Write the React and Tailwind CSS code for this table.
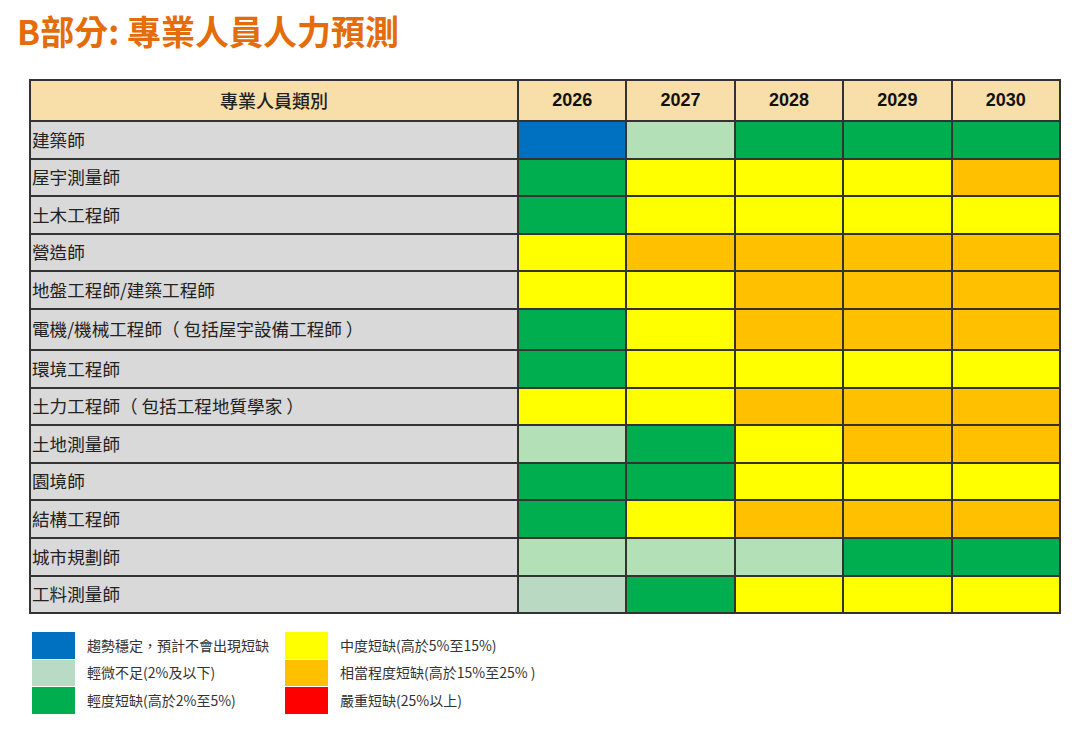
import React from "react";

const C = {
  blue: "bg-[#0070c0]",
  lg: "bg-[#b4e0b8]",
  lg2: "bg-[#b9d9c3]",
  g: "bg-[#00ae50]",
  y: "bg-[#ffff00]",
  o: "bg-[#ffc000]",
};

const years = ["2026", "2027", "2028", "2029", "2030"];

const rows = [
  { name: "建築師", cells: ["blue", "lg", "g", "g", "g"] },
  { name: "屋宇測量師", cells: ["g", "y", "y", "y", "o"] },
  { name: "土木工程師", cells: ["g", "y", "y", "y", "y"] },
  { name: "營造師", cells: ["y", "o", "o", "o", "o"] },
  { name: "地盤工程師/建築工程師", cells: ["y", "y", "o", "o", "o"] },
  { name: "電機/機械工程師（ 包括屋宇設備工程師 ）", cells: ["g", "y", "o", "o", "o"], tall: true },
  { name: "環境工程師", cells: ["g", "y", "y", "y", "y"] },
  { name: "土力工程師（ 包括工程地質學家 ）", cells: ["y", "y", "o", "o", "o"] },
  { name: "土地測量師", cells: ["lg", "g", "y", "o", "o"] },
  { name: "園境師", cells: ["g", "g", "y", "y", "y"] },
  { name: "結構工程師", cells: ["g", "y", "o", "o", "o"] },
  { name: "城市規劃師", cells: ["lg", "lg", "lg", "g", "g"] },
  { name: "工料測量師", cells: ["lg2", "g", "y", "y", "y"] },
];

const legendLeft = [
  { color: "bg-[#0070c0]", label: "趨勢穩定，預計不會出現短缺" },
  { color: "bg-[#b9dac4]", label: "輕微不足(2%及以下)" },
  { color: "bg-[#00ae50]", label: "輕度短缺(高於2%至5%)" },
];

const legendRight = [
  { color: "bg-[#ffff00]", label: "中度短缺(高於5%至15%)" },
  { color: "bg-[#ffc000]", label: "相當程度短缺(高於15%至25% )" },
  { color: "bg-[#ff0000]", label: "嚴重短缺(25%以上)" },
];

function LegendCol({ items, width }) {
  return (
    <div className={`flex flex-col gap-px ${width}`}>
      {items.map((it) => (
        <div key={it.label} className="flex items-center h-[26.5px]">
          <div className={`w-[43px] h-full ${it.color}`} />
          <span className="ml-[12px] text-[14px] text-[#333]">{it.label}</span>
        </div>
      ))}
    </div>
  );
}

export default function App() {
  return (
    <div
      className="w-[1080px] h-[736px] bg-white overflow-hidden"
      style={{ fontFamily: '"Noto Sans CJK TC", "Noto Sans", sans-serif' }}
    >
      <h1 className="pl-[17px] pt-[8px] text-[34px] leading-[46px] font-semibold text-[#e46c0a]">
        B部分: 專業人員人力預測
      </h1>

      <table className="ml-[29px] mt-[25px] w-[1032px] border-collapse border-2 border-[#333] table-fixed">
        <colgroup>
          <col className="w-[488px]" />
          {years.map((y) => (
            <col key={y} />
          ))}
        </colgroup>
        <thead>
          <tr className="h-[41px] bg-[#f8dfaa]">
            <th className="border-2 border-[#333] text-[18px] font-medium text-[#222]">專業人員類別</th>
            {years.map((y) => (
              <th
                key={y}
                className="border-2 border-[#333] text-[18px] font-bold text-[#111]"
                style={{ fontFamily: '"Liberation Sans", Arial, sans-serif' }}
              >
                {y}
              </th>
            ))}
          </tr>
        </thead>
        <tbody>
          {rows.map((r) => (
            <tr key={r.name} className={r.tall ? "h-[41px]" : "h-[37.6px]"}>
              <td className="border-2 border-[#333] bg-[#d9d9d9] pl-[1px] text-[17.6px] text-[#222] whitespace-nowrap">
                {r.name}
              </td>
              {r.cells.map((c, i) => (
                <td key={i} className={`border-2 border-[#333] ${C[c]}`} />
              ))}
            </tr>
          ))}
        </tbody>
      </table>

      <div className="flex ml-[32px] mt-[18px]">
        <LegendCol items={legendLeft} width="w-[253px]" />
        <LegendCol items={legendRight} width="w-[300px]" />
      </div>
    </div>
  );
}
